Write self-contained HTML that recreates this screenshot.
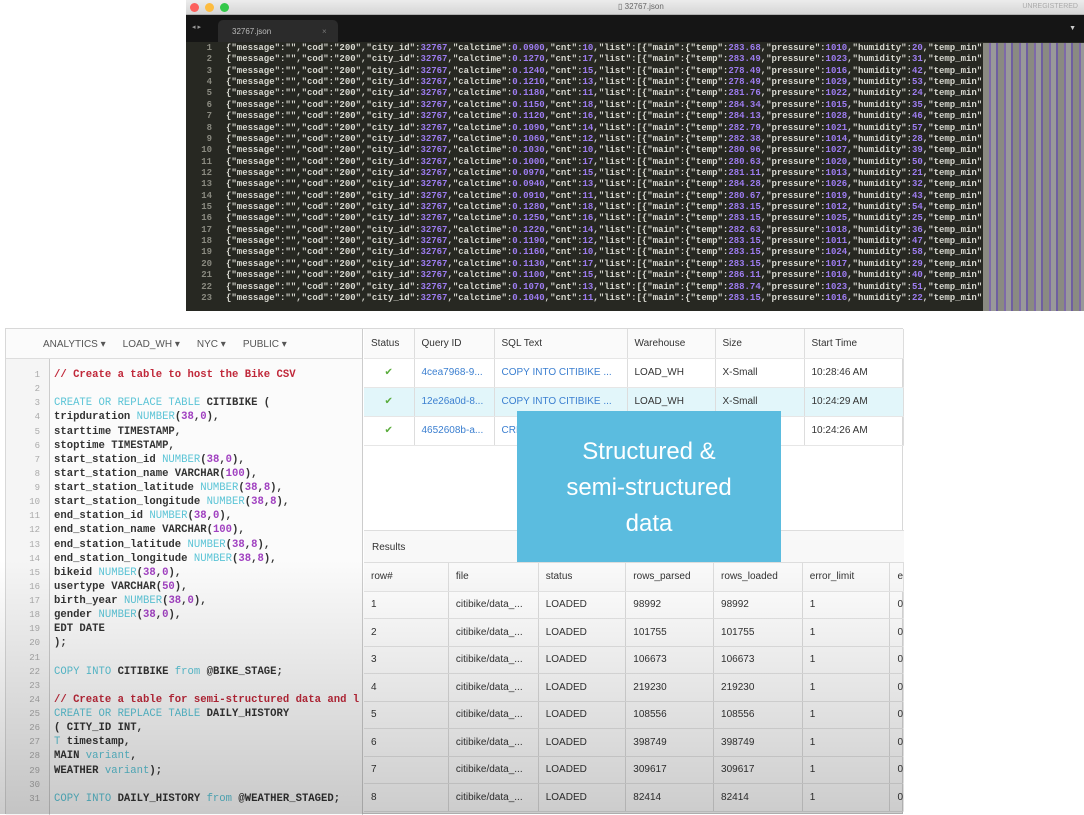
<!DOCTYPE html>
<html><head><meta charset="utf-8"><style>
*{margin:0;padding:0;box-sizing:border-box}
body{width:1084px;height:814px;background:#fff;position:relative;overflow:hidden;font-family:"Liberation Sans",sans-serif}
#win{position:absolute;left:186px;top:0;width:898px;height:311px;background:#272822;overflow:hidden}
#tb{height:15px;background:linear-gradient(#ececec,#d6d6d6);position:relative;border-bottom:1px solid #b0b0b0}
.dot{position:absolute;top:3px;width:9px;height:9px;border-radius:50%}
#tabs{height:27px;background:#151515;position:relative}
#tab{position:absolute;left:32px;top:5px;width:120px;height:22px;background:#2b2b2b;border-radius:5px 5px 0 0;color:#bbb;font-size:8px;padding:7px 0 0 14px}
#code{position:absolute;top:43px;left:0;right:0;font:bold 9px/11.36px "Liberation Mono",monospace;color:#d8d8d0;white-space:pre}
.ln{display:inline-block;width:26px;text-align:right;color:#8a8a80;margin-right:14px}
.p{color:#9d7cf0}
#mini{position:absolute;left:797px;top:43px;width:101px;height:268px;background:repeating-linear-gradient(90deg,#8a8a82 0 6px,#7e6aa8 6px 8px,#999 8px 13px,#6f5fa0 13px 15px)}
#bot{position:absolute;left:5px;top:328px;width:898px;height:486px;border:1px solid #d8d8d8;background:#fff}
#left{position:absolute;left:0;top:0;width:357px;height:486px;border-right:1px solid #ccc;background:#fbfbfb}
#lhead{height:30px;border-bottom:1px solid #ddd;font-size:10px;color:#555;padding:10px 0 0 37px;word-spacing:0}
#lhead span{margin-right:17px}
#gut{position:absolute;left:0;top:30px;width:44px;height:456px;border-right:1px solid #ccc;background:#f5f5f5}
#sql{position:absolute;left:0;top:39px;font:bold 10.6px/14.13px "Liberation Mono",monospace;color:#333;white-space:pre}
#sql .n{display:inline-block;width:34px;text-align:right;color:#aaa;font-weight:normal;font-size:9px;margin-right:14px}
.c{color:#c0283a}.k{color:#5bc4d6;font-weight:normal}.m{color:#a040c0}
table{border-collapse:collapse;position:absolute;font-size:10px;color:#333}
td{border-right:1px solid #ddd;border-bottom:1px solid #e6e6e6;padding-left:7px;white-space:nowrap;overflow:hidden}
.lnk{color:#3b7fd0}
#blue{position:absolute;left:517px;top:411px;width:264px;height:151px;background:#5bbcdf;color:#fff;font-size:24px;text-align:center;line-height:36px;padding-top:23px}
#shade{position:absolute;left:0;top:560px;width:903px;height:254px;background:linear-gradient(rgba(0,0,0,0),rgba(0,0,0,.2))}
</style></head><body>
<div id="win">
<div id="tb"><div class="dot" style="left:4px;background:#fc605c"></div><div class="dot" style="left:19px;background:#fdbc40"></div><div class="dot" style="left:34px;background:#34c84a"></div>
<div style="position:absolute;left:432px;top:2px;font-size:8px;color:#666">▯ 32767.json</div>
<div style="position:absolute;right:6px;top:3px;font-size:7px;color:#aaa">UNREGISTERED</div></div>
<div id="tabs"><span style="position:absolute;left:6px;top:8px;color:#999;font-size:7px">◂ ▸</span><div id="tab">32767.json<span style="position:absolute;left:104px;color:#777">×</span></div><span style="position:absolute;right:8px;top:10px;color:#ccc;font-size:7px">▼</span></div>
<div id="code"></div>
<div id="mini"></div>
</div>

<div id="bot">
<div id="left">
<div id="lhead"><span>ANALYTICS ▾</span><span>LOAD_WH ▾</span><span>NYC ▾</span><span>PUBLIC ▾</span></div>
<div id="gut"></div>
<div id="sql"><span class="n">1</span><span class="c">// Create a table to host the Bike CSV</span>
<span class="n">2</span>
<span class="n">3</span><span class="k">CREATE OR REPLACE TABLE</span> CITIBIKE (
<span class="n">4</span>tripduration <span class="k">NUMBER</span>(<span class="m">38</span>,<span class="m">0</span>),
<span class="n">5</span>starttime TIMESTAMP,
<span class="n">6</span>stoptime TIMESTAMP,
<span class="n">7</span>start_station_id <span class="k">NUMBER</span>(<span class="m">38</span>,<span class="m">0</span>),
<span class="n">8</span>start_station_name VARCHAR(<span class="m">100</span>),
<span class="n">9</span>start_station_latitude <span class="k">NUMBER</span>(<span class="m">38</span>,<span class="m">8</span>),
<span class="n">10</span>start_station_longitude <span class="k">NUMBER</span>(<span class="m">38</span>,<span class="m">8</span>),
<span class="n">11</span>end_station_id <span class="k">NUMBER</span>(<span class="m">38</span>,<span class="m">0</span>),
<span class="n">12</span>end_station_name VARCHAR(<span class="m">100</span>),
<span class="n">13</span>end_station_latitude <span class="k">NUMBER</span>(<span class="m">38</span>,<span class="m">8</span>),
<span class="n">14</span>end_station_longitude <span class="k">NUMBER</span>(<span class="m">38</span>,<span class="m">8</span>),
<span class="n">15</span>bikeid <span class="k">NUMBER</span>(<span class="m">38</span>,<span class="m">0</span>),
<span class="n">16</span>usertype VARCHAR(<span class="m">50</span>),
<span class="n">17</span>birth_year <span class="k">NUMBER</span>(<span class="m">38</span>,<span class="m">0</span>),
<span class="n">18</span>gender <span class="k">NUMBER</span>(<span class="m">38</span>,<span class="m">0</span>),
<span class="n">19</span>EDT DATE
<span class="n">20</span>);
<span class="n">21</span>
<span class="n">22</span><span class="k">COPY INTO</span> CITIBIKE <span class="k">from</span> @BIKE_STAGE;
<span class="n">23</span>
<span class="n">24</span><span class="c">// Create a table for semi-structured data and l</span>
<span class="n">25</span><span class="k">CREATE OR REPLACE TABLE</span> DAILY_HISTORY
<span class="n">26</span>( CITY_ID INT,
<span class="n">27</span><span class="k">T</span> timestamp,
<span class="n">28</span>MAIN <span class="k">variant</span>,
<span class="n">29</span>WEATHER <span class="k">variant</span>);
<span class="n">30</span>
<span class="n">31</span><span class="k">COPY INTO</span> DAILY_HISTORY <span class="k">from</span> @WEATHER_STAGED;</div>
</div>

<table style="left:358px;top:0;width:540px">
<tr style="height:29px;background:#fafafa"><td style="width:50px">Status</td><td style="width:80px">Query ID</td><td style="width:133px">SQL Text</td><td style="width:88px">Warehouse</td><td style="width:89px">Size</td><td>Start Time</td></tr>
<tr style="height:29px"><td style="color:#5aac3c;text-align:center;padding:0">✔</td><td class="lnk">4cea7968-9...</td><td class="lnk">COPY INTO CITIBIKE ...</td><td>LOAD_WH</td><td>X-Small</td><td>10:28:46 AM</td></tr>
<tr style="height:29px;background:#e2f6fa"><td style="color:#5aac3c;text-align:center;padding:0">✔</td><td class="lnk">12e26a0d-8...</td><td class="lnk">COPY INTO CITIBIKE ...</td><td>LOAD_WH</td><td>X-Small</td><td>10:24:29 AM</td></tr>
<tr style="height:29px"><td style="color:#5aac3c;text-align:center;padding:0">✔</td><td class="lnk">4652608b-a...</td><td class="lnk">CREATE OR ...</td><td>LOAD_WH</td><td>X-Small</td><td>10:24:26 AM</td></tr>
</table>
<div style="position:absolute;left:358px;top:201px;width:540px;height:33px;border-top:1px solid #ddd;border-bottom:1px solid #ddd;background:#f8f8f8;font-size:10px;padding:11px 0 0 8px;color:#333">Results</div>
<table style="left:358px;top:234px;width:540px">
<tr style="height:28px;background:#fafafa"><td style="width:85px">row#</td><td style="width:90px">file</td><td style="width:88px">status</td><td style="width:88px">rows_parsed</td><td style="width:89px">rows_loaded</td><td style="width:88px">error_limit</td><td>e</td></tr>
<tr style="height:27.5px"><td>1</td><td>citibike/data_...</td><td>LOADED</td><td>98992</td><td>98992</td><td>1</td><td>0</td></tr>
<tr style="height:27.5px"><td>2</td><td>citibike/data_...</td><td>LOADED</td><td>101755</td><td>101755</td><td>1</td><td>0</td></tr>
<tr style="height:27.5px"><td>3</td><td>citibike/data_...</td><td>LOADED</td><td>106673</td><td>106673</td><td>1</td><td>0</td></tr>
<tr style="height:27.5px"><td>4</td><td>citibike/data_...</td><td>LOADED</td><td>219230</td><td>219230</td><td>1</td><td>0</td></tr>
<tr style="height:27.5px"><td>5</td><td>citibike/data_...</td><td>LOADED</td><td>108556</td><td>108556</td><td>1</td><td>0</td></tr>
<tr style="height:27.5px"><td>6</td><td>citibike/data_...</td><td>LOADED</td><td>398749</td><td>398749</td><td>1</td><td>0</td></tr>
<tr style="height:27.5px"><td>7</td><td>citibike/data_...</td><td>LOADED</td><td>309617</td><td>309617</td><td>1</td><td>0</td></tr>
<tr style="height:27.5px"><td>8</td><td>citibike/data_...</td><td>LOADED</td><td>82414</td><td>82414</td><td>1</td><td>0</td></tr>
</table>
</div>
<div id="shade"></div>
<div id="blue">Structured &amp;<br>semi-structured<br>data</div>
<script>
var t=[283.68,283.49,278.49,278.49,281.76,284.34,284.13,282.79,282.38,280.96,280.63,281.11,284.28,280.67,283.15,283.15,282.63,283.15,283.15,283.15,286.11,288.74,283.15];
var h="";
for(var i=0;i<23;i++){var cal=(0.09+((i*37)%40)/1000).toFixed(4);var cnt=10+(i*7)%9;var pr=1010+(i*13)%20;var hu=20+(i*11)%40;
h+='<span class="ln">'+(i+1)+'</span>{"message":"","cod":"200","city_id":<span class="p">32767</span>,"calctime":<span class="p">'+cal+'</span>,"cnt":<span class="p">'+cnt+'</span>,"list":[{"main":{"temp":<span class="p">'+t[i].toFixed(2)+'</span>,"pressure":<span class="p">'+pr+'</span>,"humidity":<span class="p">'+hu+'</span>,"temp_min":2\n';}
document.getElementById("code").innerHTML=h;
</script>
</body></html>
